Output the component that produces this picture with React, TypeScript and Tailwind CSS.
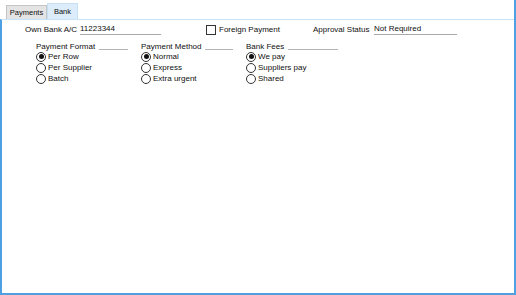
function Radio({ label, checked }: { label: string; checked?: boolean }) {
  return (
    <div className="flex items-center h-[11px]">
      <div className="w-[10px] h-[10px] rounded-full border border-[#333] bg-white flex items-center justify-center">
        {checked && <div className="w-[5px] h-[5px] rounded-full bg-[#111]" />}
      </div>
      <span className="ml-[2px] leading-none">{label}</span>
    </div>
  );
}

function Group({ title, options, selected }: { title: string; options: string[]; selected: number }) {
  return (
    <div className="w-[105px]">
      <div className="flex items-end w-[92px] h-[11px]">
        <span className="leading-none">{title}</span>
        <div className="flex-1 ml-[4px] mb-[1px] border-b border-[#b4b4b4]" />
      </div>
      <div className="flex flex-col">
        {options.map((o, i) => (
          <Radio key={o} label={o} checked={i === selected} />
        ))}
      </div>
    </div>
  );
}

export default function App() {
  return (
    <div
      className="w-[516px] h-[295px] bg-white text-[8px] text-[#0f0f0f] flex flex-col border-r-2 border-[#4f9fe3]"
      style={{ fontFamily: '"Liberation Sans", Arial, sans-serif' }}
    >
      {/* Tabs */}
      <div className="flex items-end h-[19px] pl-[6px] text-[7.5px]">
        <div className="h-[14px] w-[41px] flex items-center justify-center bg-[#e4e4e4] border border-b-0 border-[#c4c4c4]">
          Payments
        </div>
        <div className="h-[16px] w-[31px] flex items-center justify-center bg-[#dcecfb] border border-b-0 border-[#c5dff5]">
          Bank
        </div>
      </div>

      {/* Panel */}
      <div className="flex-1 border-t border-[#c9e3f8] border-l-2 border-l-[#4f9fe3] border-b-2 border-b-[#4f9fe3]">
        <div className="flex items-center h-[10px] mt-[5px]">
          <span className="w-[55px] ml-[23px] leading-none">Own Bank A/C</span>
          <div className="w-[81px] border-b border-[#a8a8a8] leading-none pb-[1px]">11223344</div>
          <div className="ml-[45px] w-[107px] flex items-center">
            <div className="w-[10px] h-[10px] border border-[#333] bg-white" />
            <span className="ml-[3px] leading-none">Foreign Payment</span>
          </div>
          <span className="w-[61px] leading-none">Approval Status</span>
          <div className="w-[83px] border-b border-[#a8a8a8] leading-none pb-[1px]">Not Required</div>
        </div>

        <div className="flex mt-[5px] ml-[34px]">
          <Group title="Payment Format" options={["Per Row", "Per Supplier", "Batch"]} selected={0} />
          <Group title="Payment Method" options={["Normal", "Express", "Extra urgent"]} selected={0} />
          <Group title="Bank Fees" options={["We pay", "Suppliers pay", "Shared"]} selected={0} />
        </div>
      </div>
    </div>
  );
}
